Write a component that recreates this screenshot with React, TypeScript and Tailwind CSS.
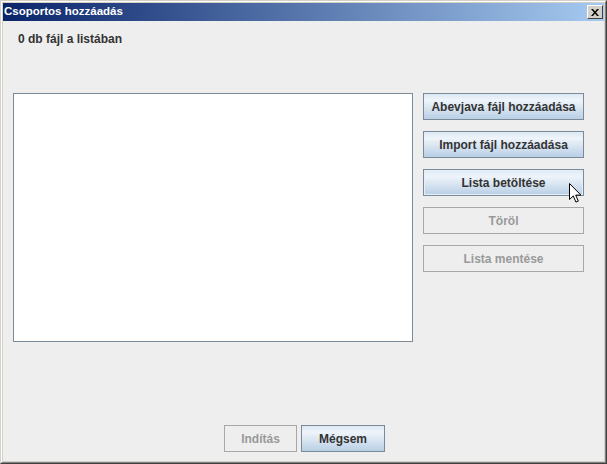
const ocean =
  'bg-[linear-gradient(to_bottom,#dde8f3_0%,#eef4fa_25%,#dde8f3_50%,#b8cfe5_100%)] border border-[#7a8a99] text-[#333333]'
const disabled = 'bg-[#eeeeee] border border-[#a8a8a8] text-[#999999]'

function Btn({ label, off, hover, w }: { label: string; off?: boolean; hover?: boolean; w: string }) {
  return (
    <button
      className={`${w} h-[27px] flex items-center justify-center text-[12px] font-bold leading-none ${off ? disabled : ocean} ${
        hover ? 'shadow-[inset_0_0_0_1px_#e6eff8]' : ''
      }`}
    >
      {label}
    </button>
  )
}

export default function App() {
  return (
    <div className="w-[607px] h-[464px] border border-t-[#d4d0c8] border-l-[#d4d0c8] border-r-[#404040] border-b-[#404040] font-['Liberation_Sans',Arial,sans-serif]">
      <div className="h-full border border-t-white border-l-white border-r-[#808080] border-b-[#808080]">
        <div className="h-full flex flex-col border border-[#d4d0c8] bg-[#eeeeee] relative">
          <header className="h-[18px] shrink-0 flex items-center justify-between pl-[1px] pr-[1px] bg-[linear-gradient(to_right,#0a246a,#a6caf0)]">
            <span className="text-white text-[11.5px] font-bold leading-none">Csoportos hozzáadás</span>
            <span className="w-[16px] h-[14px] flex items-center justify-center bg-[#d4d0c8] border border-t-white border-l-white border-r-[#404040] border-b-[#404040]">
              <svg width="8" height="7" viewBox="0 0 8 7">
                <path d="M0 0h2l2 2.5L6 0h2L5 3.5 8 7H6L4 4.5 2 7H0l3-3.5z" fill="#000" />
              </svg>
            </span>
          </header>

          <main className="flex-1 flex flex-col">
            <p className="ml-[15px] mt-[10px] h-4 leading-4 text-[12px] font-bold text-[#333333]">0 db fájl a listában</p>

            <section className="mt-[46px] ml-[10px] flex gap-[10px]">
              <div className="w-[400px] h-[249px] border border-[#7a8a99] bg-white" />
              <div className="flex flex-col gap-[11px]">
                <Btn w="w-[161px]" label="Abevjava fájl hozzáadása" />
                <Btn w="w-[161px]" label="Import fájl hozzáadása" />
                <Btn w="w-[161px]" label="Lista betöltése" hover />
                <Btn w="w-[161px]" label="Töröl" off />
                <Btn w="w-[161px]" label="Lista mentése" off />
              </div>
            </section>

            <footer className="mt-[83px] ml-[221px] flex gap-[4px]">
              <Btn w="w-[73px]" label="Indítás" off />
              <Btn w="w-[84px]" label="Mégsem" />
            </footer>
          </main>

          <svg className="absolute left-[566px] top-[180px]" width="13" height="21" viewBox="0 0 13 21">
            <path
              d="M0.5 0.5v16l3.8-3.6 2.6 6.2 2.4-1-2.6-6h5.2z"
              fill="#fff"
              stroke="#000"
              strokeWidth="1"
              strokeLinejoin="miter"
            />
          </svg>
        </div>
      </div>
    </div>
  )
}
